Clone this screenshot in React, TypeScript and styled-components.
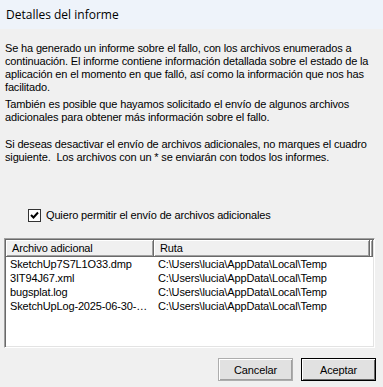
import React, { useState } from "react";
import styled, { createGlobalStyle } from "styled-components";

const GlobalStyle = createGlobalStyle`
    html, body {
        margin: 0;
        padding: 0;
        background-color: #f0f0f0;
    }
    body {
        font-family: "Liberation Sans", "DejaVu Sans", sans-serif;
        font-size: 11px;
        letter-spacing: -0.15px;
        color: #000;
    }
`;

const Window = styled.div`
    width: 383px;
    height: 387px;
    display: flex;
    flex-direction: column;
    background-color: #f0f0f0;
    overflow: hidden;
`;

const TitleBar = styled.div`
    height: 29px;
    flex: none;
    display: flex;
    align-items: center;
    padding-left: 6px;
    background-color: #eef3fa;
    font-family: "Open Sans", "Noto Sans", sans-serif;
    font-size: 12px;
    letter-spacing: 0;
`;

const Body = styled.div`
    display: flex;
    flex-direction: column;
    padding: 13px 7px 0 5px;
`;

const Text = styled.p<{ $gap?: number }>`
    margin: ${(p) => p.$gap ?? 0}px 0 0;
    line-height: 13px;
    white-space: nowrap;
`;

const CheckRow = styled.label`
    display: flex;
    align-items: center;
    gap: 5px;
    margin: 44px 0 0 23px;
    height: 14px;
    cursor: default;
`;

const Box = styled.span`
    width: 13px;
    height: 13px;
    box-sizing: border-box;
    border: 1px solid #333;
    background: #fff;
    display: flex;
    align-items: center;
    justify-content: center;
`;

const List = styled.div`
    margin: 16px 0 0 -1px;
    height: 110px;
    width: 371px;
    box-sizing: border-box;
    border: 1px solid;
    border-color: #a0a0a0 #fff #fff #a0a0a0;
    box-shadow: inset 1px 1px 0 #696969, inset -1px -1px 0 #e3e3e3;
    background: #fff;
    padding: 1px;
    display: flex;
    flex-direction: column;
`;

const Header = styled.div`
    display: flex;
    height: 17px;
    background: #f0f0f0;
`;

const HeadCell = styled.div<{ $w: number }>`
    width: ${(p) => p.$w}px;
    flex: none;
    box-sizing: border-box;
    padding-left: ${(p) => (p.$w > 10 ? 6 : 0)}px;
    display: flex;
    align-items: center;
    border-right: 1px solid #696969;
    border-bottom: 1px solid #696969;
    box-shadow: inset 1px 1px 0 #fff, inset -1px -1px 0 #a0a0a0;
    white-space: nowrap;
`;

const Row = styled.div`
    display: flex;
    height: 14px;
    align-items: center;
    white-space: nowrap;
`;

const Cell = styled.div<{ $w: number }>`
    width: ${(p) => p.$w}px;
    flex: none;
    box-sizing: border-box;
    padding-left: 4px;
    padding-right: 4px;
    overflow: hidden;
    text-overflow: ellipsis;
`;

const Buttons = styled.div`
    display: flex;
    justify-content: flex-end;
    gap: 8px;
    margin-top: 10px;
`;

const Button = styled.button<{ $default?: boolean }>`
    width: 75px;
    height: 23px;
    box-sizing: border-box;
    font-family: inherit;
    font-size: 11px;
    letter-spacing: inherit;
    color: #000;
    background: #e1e1e1;
    border: 1px solid ${(p) => (p.$default ? "#000" : "#adadad")};
    box-shadow: ${(p) =>
        p.$default ? "inset 1px 1px 0 #fff, inset -1px -1px 0 #696969" : "inset 1px 1px 0 #fff, inset -1px -1px 0 #a0a0a0"};
    padding: 0;
    cursor: default;
`;

const files = [
    "SketchUp7S7L1O33.dmp",
    "3IT94J67.xml",
    "bugsplat.log",
    "SketchUpLog-2025-06-30-14-22-07.log",
];

const App = (): JSX.Element => {
    const [checked, setChecked] = useState<boolean>(true);

    return (
        <Window>
            <GlobalStyle />
            <TitleBar>Detalles del informe</TitleBar>
            <Body>
                <Text>
                    Se ha generado un informe sobre el fallo, con los archivos enumerados a
                    <br />
                    continuación. El informe contiene información detallada sobre el estado de la
                    <br />
                    aplicación en el momento en que falló, así como la información que nos has
                    <br />
                    facilitado.
                </Text>
                <Text $gap={4}>
                    También es posible que hayamos solicitado el envío de algunos archivos
                    <br />
                    adicionales para obtener más información sobre el fallo.
                </Text>
                <Text $gap={14}>
                    Si deseas desactivar el envío de archivos adicionales, no marques el cuadro
                    <br />
                    siguiente.&nbsp; Los archivos con un * se enviarán con todos los informes.
                </Text>
                <CheckRow onClick={() => setChecked(!checked)}>
                    <Box>
                        {checked && (
                            <svg width="9" height="9" viewBox="0 0 9 9">
                                <path d="M1 4 L3.5 6.5 L8 1.5" stroke="#000" strokeWidth="2" fill="none" />
                            </svg>
                        )}
                    </Box>
                    Quiero permitir el envío de archivos adicionales
                </CheckRow>
                <List>
                    <Header>
                        <HeadCell $w={148}>Archivo adicional</HeadCell>
                        <HeadCell $w={216}>Ruta</HeadCell>
                        <HeadCell $w={3} />
                    </Header>
                    {files.map((f) => (
                        <Row key={f}>
                            <Cell $w={148}>{f}</Cell>
                            <Cell $w={216}>C:\Users\lucia\AppData\Local\Temp</Cell>
                        </Row>
                    ))}
                </List>
                <Buttons>
                    <Button>Cancelar</Button>
                    <Button $default>Aceptar</Button>
                </Buttons>
            </Body>
        </Window>
    );
};

export default App;
